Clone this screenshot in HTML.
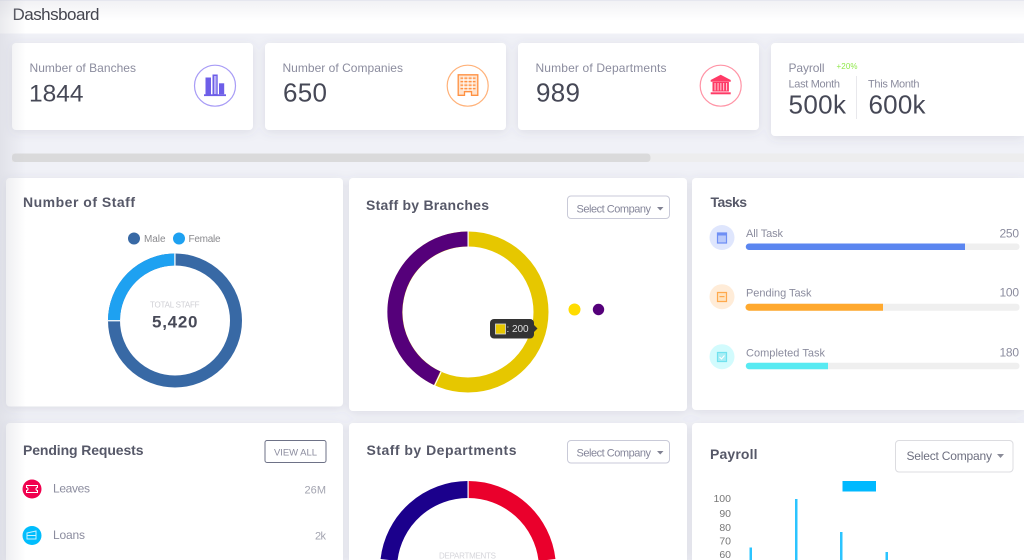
<!DOCTYPE html>
<html lang="en">
<head>
<meta charset="utf-8">
<title>Dashboard</title>
<style>
html,body{margin:0;padding:0;width:1024px;height:560px;overflow:hidden;background:#f0f1f7}
svg{display:block;position:absolute;left:0;top:0;overflow:hidden;filter:blur(.35px)}
text{font-family:"Liberation Sans",sans-serif}
.t{font-weight:700;font-size:14px;fill:#565868}
.l{fill:#8b8c9e}
.n{fill:#464856}
</style>
</head>
<body>
<svg width="1024" height="560" viewBox="0 0 1024 560" xmlns="http://www.w3.org/2000/svg">
<defs>
<filter id="s" x="-10%" y="-15%" width="120%" height="135%"><feDropShadow dx="0" dy="2" stdDeviation="5" flood-color="#50506e" flood-opacity=".13"/></filter>
<linearGradient id="h" x1="0" y1="0" x2="0" y2="1"><stop offset="0" stop-color="#f1f1f4"/><stop offset=".6" stop-color="#fff"/></linearGradient>
<linearGradient id="e" x1="0" y1="0" x2="1" y2="0"><stop offset="0" stop-color="#c8c9d2" stop-opacity=".38"/><stop offset="1" stop-color="#c8c9d2" stop-opacity="0"/></linearGradient>
</defs>
<rect width="1024" height="560" fill="#f0f1f7"/>
<rect width="1024" height="33.500" fill="url(#h)"/>
<rect width="1024" height="1" fill="#e6e7ef"/>
<text x="12.500" y="20" font-size="17" fill="#44454f" textLength="87">Dashsboard</text>

<!-- KPI cards -->
<g fill="#fff" filter="url(#s)">
<rect x="12" y="43" width="241" height="87" rx="4"/>
<rect x="265" y="43" width="241" height="87" rx="4"/>
<rect x="518" y="43" width="241" height="87" rx="4"/>
<path d="M775 43H1024V136H775a4 4 0 0 1-4-4V47a4 4 0 0 1 4-4z"/>
</g>
<text x="29.500" y="72" font-size="12" class="l" textLength="106.500">Number of Banches</text>
<text x="29" y="101.500" font-size="24.500" class="n" textLength="54.500">1844</text>
<text x="282.500" y="72" font-size="12" class="l" textLength="120.500">Number of Companies</text>
<text x="283" y="101.500" font-size="26" class="n" textLength="44">650</text>
<text x="535.500" y="72" font-size="12" class="l" textLength="131">Number of Departments</text>
<text x="536" y="101.500" font-size="26" class="n" textLength="44">989</text>
<text x="788.500" y="72" font-size="12" class="l" textLength="36">Payroll</text>
<text x="836.500" y="69" font-size="8" fill="#8fe84a" textLength="21">+20%</text>
<text x="788.500" y="87.500" font-size="11" class="l" textLength="51.500">Last Month</text>
<text x="868" y="87.500" font-size="11" class="l" textLength="51.500">This Month</text>
<text x="788.500" y="113.500" font-size="26" class="n" textLength="57.500">500k</text>
<text x="868.500" y="113.500" font-size="26" class="n" textLength="57">600k</text>
<rect x="856" y="76" width="1" height="43" fill="#e8e8ec"/>

<!-- KPI icons -->
<circle cx="215" cy="85.700" r="20.500" fill="#fff" stroke="#a89cf6" stroke-width="1.200"/>
<g fill="#6d5ee8">
<rect x="205.500" y="77.500" width="5.500" height="17"/>
<path d="M212.500 74.500h5.200V95h-5.200zM214 76v18h2.200V76z" fill-rule="evenodd"/>
<rect x="214" y="76" width="2.200" height="18" fill="#b9b1f5"/>
<rect x="219" y="83.300" width="5.200" height="11"/>
<rect x="204" y="94.300" width="22" height="1.800"/>
</g>
<circle cx="467.700" cy="85.700" r="20.500" fill="#fff" stroke="#ffb27a" stroke-width="1.200"/>
<path d="M458.200 74.800h19.600v20.500h-6.300v-3.600h-7v3.600h-6.300z" fill="#ffe3cd" stroke="#ff9142" stroke-width="1.300"/>
<g fill="#ff9142">
<rect x="460.500" y="77.500" width="15" height="1.300"/>
<rect x="460.500" y="81" width="15" height="1.300"/>
<rect x="460.500" y="84.500" width="15" height="1.300"/>
<rect x="460.500" y="88" width="15" height="1.300"/>
</g>
<g fill="#fff">
<rect x="463.300" y="76.500" width="1" height="14"/>
<rect x="467.500" y="76.500" width="1" height="14"/>
<rect x="471.700" y="76.500" width="1" height="14"/>
</g>
<circle cx="720.700" cy="85.700" r="20.500" fill="#fff" stroke="#ff94a6" stroke-width="1.200"/>
<g fill="#ff3a66">
<path d="M720.700 74.800l10 5.200v1.700h-20V80z"/>
<rect x="712.500" y="82" width="16.400" height="9.500"/>
<rect x="710.700" y="92.300" width="20" height="2"/>
</g>
<g fill="#ffc9d4">
<rect x="714.500" y="83" width="1.100" height="7.500"/>
<rect x="717.500" y="83" width="1.100" height="7.500"/>
<rect x="720.300" y="83" width="1.100" height="7.500"/>
<rect x="723.100" y="83" width="1.100" height="7.500"/>
<rect x="726" y="83" width="1.100" height="7.500"/>
</g>

<!-- scrollbar -->
<rect x="12" y="153.500" width="1012" height="8.500" fill="#ededee"/>
<rect x="12" y="153.500" width="638.500" height="8.500" rx="3.500" fill="#dadadb"/>

<!-- Row 2 cards -->
<g fill="#fff" filter="url(#s)">
<rect x="6" y="178" width="337" height="228.500" rx="4"/>
<rect x="349" y="178" width="338" height="233" rx="4"/>
<path d="M696 178H1024V410H696a4 4 0 0 1-4-4V182a4 4 0 0 1 4-4z"/>
<path d="M10 423H339a4 4 0 0 1 4 4V560H6V427a4 4 0 0 1 4-4z"/>
<path d="M353 423H683a4 4 0 0 1 4 4V560H349V427a4 4 0 0 1 4-4z"/>
<path d="M696 423H1024V560H692V427a4 4 0 0 1 4-4z"/>
</g>

<!-- Number of Staff -->
<text x="23" y="207" class="t" textLength="112">Number of Staff</text>
<circle cx="134" cy="238.500" r="6" fill="#3869a5"/>
<text x="144" y="242" font-size="10" fill="#8a8a8e" textLength="21.500">Male</text>
<circle cx="179" cy="238.500" r="6" fill="#1ea1f1"/>
<text x="188.500" y="242" font-size="10" fill="#8a8a8e" textLength="32">Female</text>
<circle cx="175" cy="320.500" r="61" fill="none" stroke="#3869a5" stroke-width="12"/>
<path d="M175 259.500A61 61 0 0 0 114 320.500" fill="none" stroke="#1ea1f1" stroke-width="12"/>
<rect x="174.200" y="253" width="1.400" height="13" fill="#e8f2fa"/>
<rect x="107.500" y="320" width="13" height="1.400" fill="#e8f2fa"/>
<text x="150" y="307.700" font-size="8" fill="#cfcfd4" textLength="49.500">TOTAL STAFF</text>
<text x="152" y="327.500" font-size="17" font-weight="700" fill="#484a58" textLength="45.500">5,420</text>

<!-- Staff by Branches -->
<text x="366" y="210" class="t" textLength="123">Staff by Branches</text>
<rect x="567.500" y="196" width="102" height="22.500" rx="3.500" fill="#fff" stroke="#c9cad8"/>
<text x="576.500" y="212.500" font-size="11" fill="#85869a" textLength="74.500">Select Company</text>
<path d="M657 207h6.500l-3.250 3.500z" fill="#808192"/>
<circle cx="468" cy="312" r="73" fill="none" stroke="#e6c700" stroke-width="15"/>
<path d="M468 239A73 73 0 0 0 437.100 378.200" fill="none" stroke="#55007a" stroke-width="15"/>
<rect x="467.500" y="231" width="1.200" height="16" fill="#fff"/>
<path d="M441.100 372l-7.400 15.400" stroke="#fff" stroke-width="1.200"/>
<circle cx="574.500" cy="309.500" r="6" fill="#ffdc00"/>
<circle cx="598.500" cy="309.500" r="5.700" fill="#55007a"/>
<rect x="490" y="319" width="44" height="19.500" rx="4" fill="#333"/>
<path d="M533 324l4.500 4.500-4.500 4.500z" fill="#333"/>
<rect x="495.500" y="324" width="10" height="10" fill="#e6c700" stroke="#ddd" stroke-width=".8"/>
<text x="506.500" y="332" font-size="10" fill="#e0e0e0" textLength="22">: 200</text>

<!-- Tasks -->
<text x="710.500" y="207" class="t" textLength="36.500">Tasks</text>
<circle cx="722" cy="237.500" r="12.500" fill="#dfe6fd"/>
<path d="M717.500 233h9v10h-9z" fill="#b9c9fa" stroke="#6f8ff5" stroke-width="1.200"/>
<rect x="717" y="232.500" width="10" height="3" fill="#6f8ff5"/>
<circle cx="722" cy="296.700" r="12.500" fill="#ffecd8"/>
<path d="M717.500 292.500h9v9h-9z" fill="#ffe3bf" stroke="#ffa94d" stroke-width="1.200"/>
<rect x="719.500" y="296" width="5" height="1.200" fill="#ffa94d"/>
<circle cx="722" cy="356.700" r="12.500" fill="#d2fbfd"/>
<path d="M717.500 352.500h9v9h-9z" fill="#a8eef5" stroke="#70e2ef" stroke-width="1.200"/>
<path d="M719.500 357l2 2 3-3.500" fill="none" stroke="#fff" stroke-width="1.100"/>
<text x="746" y="237" font-size="11" class="l" textLength="37">All Task</text>
<text x="999.500" y="237.500" font-size="12" class="l" textLength="19.500">250</text>
<rect x="746" y="243.500" width="273.500" height="6.500" rx="3" fill="#efefef"/>
<path d="M749 243.500H965V250H749a3 3 0 0 1 0-6.500z" fill="#5b86f0"/>
<text x="746" y="296.500" font-size="11" class="l" textLength="65.500">Pending Task</text>
<text x="999.500" y="296.500" font-size="12" class="l" textLength="19.500">100</text>
<rect x="746" y="303.700" width="273.500" height="7" rx="3" fill="#efefef"/>
<path d="M749 303.700H883V310.700H749a3 3 0 0 1 0-7z" fill="#ffa92f"/>
<text x="746" y="356.500" font-size="11" class="l" textLength="79">Completed Task</text>
<text x="999.500" y="356.500" font-size="12" class="l" textLength="19.500">180</text>
<rect x="746" y="362.700" width="273.500" height="6.500" rx="3" fill="#efefef"/>
<path d="M749 362.700H828V369.200H749a3 3 0 0 1 0-6.500z" fill="#58eaf2"/>

<!-- Pending Requests -->
<text x="23" y="455" class="t" textLength="120.500">Pending Requests</text>
<rect x="265" y="440.500" width="61" height="22" rx="2" fill="#fff" stroke="#6e7287" stroke-width="1"/>
<text x="274" y="455.500" font-size="9.500" fill="#8b8c9e" textLength="43">VIEW ALL</text>
<circle cx="32" cy="489" r="9.500" fill="#f0004e"/>
<path d="M26.500 485.500h11v2a1.500 1.500 0 0 0 0 3v2h-11v-2a1.500 1.500 0 0 0 0-3z" fill="none" stroke="#fff" stroke-width="1"/>
<text x="53" y="492.500" font-size="12" class="l" textLength="37">Leaves</text>
<text x="304.500" y="493.500" font-size="11" fill="#a3a4b0" textLength="21.500">26M</text>
<circle cx="32" cy="535.500" r="9.500" fill="#00bdfd"/>
<path d="M27 533l9-2v8h-9zM27 535.500h9" fill="none" stroke="#c9f1ff" stroke-width="1"/>
<text x="53" y="539" font-size="12" class="l" textLength="32">Loans</text>
<text x="315" y="539.500" font-size="11" fill="#a3a4b0" textLength="11">2k</text>

<!-- Staff by Departments -->
<text x="366.500" y="455" class="t" textLength="150">Staff by Departments</text>
<rect x="567.500" y="440.500" width="102" height="22.500" rx="3.500" fill="#fff" stroke="#c9cad8"/>
<text x="576.500" y="456.500" font-size="11" fill="#85869a" textLength="74.500">Select Company</text>
<path d="M657 451h6.500l-3.250 3.500z" fill="#808192"/>
<path d="M468 489.500A79.500 79.500 0 0 1 547 560" fill="none" stroke="#ea002c" stroke-width="17"/>
<path d="M468 489.500A79.500 79.500 0 0 0 389 560" fill="none" stroke="#1b008c" stroke-width="17"/>
<rect x="467.500" y="481" width="1.200" height="17" fill="#fff"/>
<text x="439" y="558.500" font-size="8" fill="#d5d5da" textLength="57">DEPARTMENTS</text>

<!-- Payroll chart -->
<text x="710" y="459" class="t" textLength="47.500">Payroll</text>
<rect x="895.500" y="440.500" width="117.500" height="31.500" rx="3.500" fill="#fff" stroke="#dcdce0"/>
<text x="906.500" y="460" font-size="12" fill="#6e7080" textLength="85.500">Select Company</text>
<path d="M997 454h7l-3.500 4z" fill="#8a8b98"/>
<rect x="842.500" y="481" width="33.500" height="10.500" fill="#00b9ff"/>
<g font-size="10.500" fill="#777" text-anchor="end">
<text x="731" y="502">100</text>
<text x="731" y="517">90</text>
<text x="731" y="531">80</text>
<text x="731" y="544.500">70</text>
<text x="731" y="558">60</text>
</g>
<g fill="#2bc4ff">
<rect x="749.500" y="547.500" width="2.500" height="12.500"/>
<rect x="795" y="499" width="2.500" height="61"/>
<rect x="840" y="532" width="2.500" height="28"/>
<rect x="885.500" y="552" width="2.500" height="8"/>
</g>

<!-- left edge shading -->
<rect x="0" y="0" width="26" height="560" fill="url(#e)"/>
</svg>
</body>
</html>
